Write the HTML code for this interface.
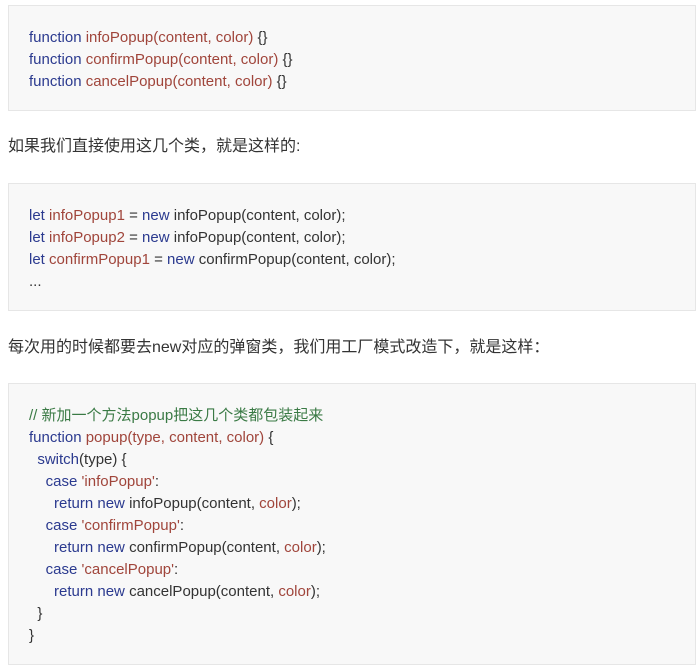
<html><head><style>
body{margin:0;background:#fff;font-family:"Liberation Sans","Noto Sans CJK SC",sans-serif;font-size:15px;color:#333}
.b{position:absolute;left:8px;width:688px;background:#f8f8f8;border:1px solid #e6e6e6;box-sizing:border-box;padding:0 0 0 20px}
.b div{height:22px;line-height:22px;white-space:pre}
.k{color:#2b3a8f}.f{color:#a0453b}.c{color:#3a7a45}.s{color:#a0453b}
p{position:absolute;left:8px;margin:0;font-size:16px;line-height:22px}
</style></head><body>
<div class="b" style="top:5px;height:106px;padding-top:21px">
<div><span class="k">function</span> <span class="f">infoPopup(content, color)</span> {}</div>
<div><span class="k">function</span> <span class="f">confirmPopup(content, color)</span> {}</div>
<div><span class="k">function</span> <span class="f">cancelPopup(content, color)</span> {}</div>
</div>
<p style="top:136px">如果我们直接使用这几个类，就是这样的:</p>
<div class="b" style="top:183px;height:128px;padding-top:21px">
<div><span class="k">let</span> <span class="f">infoPopup1</span> = <span class="k">new</span> infoPopup(content, color);</div>
<div><span class="k">let</span> <span class="f">infoPopup2</span> = <span class="k">new</span> infoPopup(content, color);</div>
<div><span class="k">let</span> <span class="f">confirmPopup1</span> = <span class="k">new</span> confirmPopup(content, color);</div>
<div>...</div>
</div>
<p style="top:337px">每次用的时候都要去new对应的弹窗类，我们用工厂模式改造下，就是这样：</p>
<div class="b" style="top:383px;height:282px;padding-top:21px">
<div class="c">// 新加一个方法popup把这几个类都包装起来</div>
<div><span class="k">function</span> <span class="f">popup(type, content, color)</span> {</div>
<div>  <span class="k">switch</span>(type) {</div>
<div>    <span class="k">case</span> <span class="s">'infoPopup'</span>:</div>
<div>      <span class="k">return</span> <span class="k">new</span> infoPopup(content, <span class="f">color</span>);</div>
<div>    <span class="k">case</span> <span class="s">'confirmPopup'</span>:</div>
<div>      <span class="k">return</span> <span class="k">new</span> confirmPopup(content, <span class="f">color</span>);</div>
<div>    <span class="k">case</span> <span class="s">'cancelPopup'</span>:</div>
<div>      <span class="k">return</span> <span class="k">new</span> cancelPopup(content, <span class="f">color</span>);</div>
<div>  }</div>
<div>}</div>
</div>
</body></html>
